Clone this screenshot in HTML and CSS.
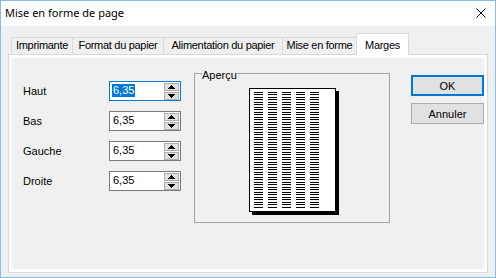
FILE: index.html
```html
<!DOCTYPE html>
<html lang="fr">
<head>
<meta charset="utf-8">
<title>Mise en forme de page</title>
<link rel="stylesheet" href="styles.css">
</head>
<body>
<div class="window">
  <div class="titlebar">
    <span class="title">Mise en forme de page</span>
    <svg class="close" width="10" height="10" viewBox="0 0 10 10"><path d="M0.5 0.5 L9.5 9.5 M9.5 0.5 L0.5 9.5" stroke="#000" stroke-width="1" fill="none"/></svg>
  </div>
  <div class="client">
    <div class="tabs">
      <div class="tab t1">Imprimante</div>
      <div class="tab t2">Format du papier</div>
      <div class="tab t3">Alimentation du papier</div>
      <div class="tab t4">Mise en forme</div>
      <div class="tab active t5">Marges</div>
    </div>
    <div class="panel">
      <div class="page">
        <div class="fields">
          <span class="lbl">Haut</span>
          <div class="spin focus"><span class="val"><span class="sel">6,35</span></span><div class="arrows"><div class="arr"><svg width="7" height="4" class="ico"><rect x="3" y="0" width="1" height="1"/><rect x="2" y="1" width="3" height="1"/><rect x="1" y="2" width="5" height="1"/><rect x="0" y="3" width="7" height="1"/></svg></div><div class="arr"><svg width="7" height="4" class="ico"><rect x="0" y="0" width="7" height="1"/><rect x="1" y="1" width="5" height="1"/><rect x="2" y="2" width="3" height="1"/><rect x="3" y="3" width="1" height="1"/></svg></div></div></div>
          <span class="lbl">Bas</span>
          <div class="spin"><span class="val">6,35</span><div class="arrows"><div class="arr"><svg width="7" height="4" class="ico"><rect x="3" y="0" width="1" height="1"/><rect x="2" y="1" width="3" height="1"/><rect x="1" y="2" width="5" height="1"/><rect x="0" y="3" width="7" height="1"/></svg></div><div class="arr"><svg width="7" height="4" class="ico"><rect x="0" y="0" width="7" height="1"/><rect x="1" y="1" width="5" height="1"/><rect x="2" y="2" width="3" height="1"/><rect x="3" y="3" width="1" height="1"/></svg></div></div></div>
          <span class="lbl">Gauche</span>
          <div class="spin"><span class="val">6,35</span><div class="arrows"><div class="arr"><svg width="7" height="4" class="ico"><rect x="3" y="0" width="1" height="1"/><rect x="2" y="1" width="3" height="1"/><rect x="1" y="2" width="5" height="1"/><rect x="0" y="3" width="7" height="1"/></svg></div><div class="arr"><svg width="7" height="4" class="ico"><rect x="0" y="0" width="7" height="1"/><rect x="1" y="1" width="5" height="1"/><rect x="2" y="2" width="3" height="1"/><rect x="3" y="3" width="1" height="1"/></svg></div></div></div>
          <span class="lbl">Droite</span>
          <div class="spin"><span class="val">6,35</span><div class="arrows"><div class="arr"><svg width="7" height="4" class="ico"><rect x="3" y="0" width="1" height="1"/><rect x="2" y="1" width="3" height="1"/><rect x="1" y="2" width="5" height="1"/><rect x="0" y="3" width="7" height="1"/></svg></div><div class="arr"><svg width="7" height="4" class="ico"><rect x="0" y="0" width="7" height="1"/><rect x="1" y="1" width="5" height="1"/><rect x="2" y="2" width="3" height="1"/><rect x="3" y="3" width="1" height="1"/></svg></div></div></div>
        </div>
        <div class="group">
          <span class="legend">Aperçu</span>
          <div class="sheet">
            <div class="cols">
              <div class="col"></div><div class="col"></div><div class="col"></div><div class="col"></div><div class="col"></div>
            </div>
          </div>
        </div>
        <div class="buttons">
          <div class="btn default">OK</div>
          <div class="btn">Annuler</div>
        </div>
      </div>
    </div>
  </div>
</div>
</body>
</html>
```

FILE: styles.css
```css
* { box-sizing: border-box; }
html, body { margin: 0; padding: 0; }
body { width: 496px; height: 278px; overflow: hidden; background: #f0f0f0; }

.window {
  width: 496px; height: 278px;
  border: 1px solid #88bbee;
  background: #f0f0f0;
  display: flex; flex-direction: column;
}
.titlebar {
  height: 25px; background: #fff;
  display: flex; align-items: center;
  padding: 0 9px 1px 4px;
}
.title { font-family: "Noto Sans", sans-serif; font-size: 11px; color: #000; line-height: 16px; }
.close { margin-left: auto; display: block; }

.client { flex: 1; padding: 7px 7px 4px 7px; display: flex; flex-direction: column; }

.tabs { height: 21px; display: flex; align-items: flex-end; padding-left: 3px; }
.tab {
  height: 17px; border: 1px solid #d9d9d9; border-bottom: none;
  background: #f0f0f0; margin-left: -1px;
  font-family: "Liberation Sans", Arial, sans-serif; font-size: 11px; line-height: 15px;
  letter-spacing: -0.3px;
  text-align: center; white-space: nowrap; overflow: hidden; color: #000;
}
.t1 { margin-left: 0; width: 62px; }
.t2 { width: 92px; }
.t3 { width: 120px; }
.t4 { width: 75px; }
.t5 { width: 53px; }
.tab.active { height: 22px; margin-bottom: -1px; background: #fff; position: relative; z-index: 1; padding-top: 4px; }

.panel { height: 219px; border: 1px solid #d9d9d9; background: #fff; padding: 3px; }
.page { height: 100%; background: #f0f0f0; display: flex; align-items: flex-start; }

.fields {
  margin-top: 23px; padding-left: 11px;
  display: grid; grid-template-columns: 86px 72px; grid-auto-rows: 20px; row-gap: 10px; align-items: center;
  font-family: "Liberation Sans", Arial, sans-serif; font-size: 11px;
}
.lbl { color: #000; }
.spin { height: 20px; border: 1px solid #7a7a7a; background: #fff; display: flex; align-items: center; padding: 0 1px 2px 3px; }
.spin.focus { border-color: #0078d7; }
.val { flex: 1; line-height: 13px; color: #000; }
.sel { display: inline-block; height: 13px; background: #0078d7; color: #fff; margin-left: -1px; padding: 0 1px; }
.arrows { width: 15px; display: flex; flex-direction: column; gap: 1px; margin-bottom: -2px; }
.arr { height: 8px; border: 1px solid #adadad; background: #e1e1e1; display: flex; align-items: center; justify-content: center; }
.ico { display: block; fill: #000; shape-rendering: crispEdges; }

.group {
  margin-left: 13px; margin-top: 15px; width: 196px; height: 150px;
  border: 1px solid #a0a0a0; position: relative; padding-top: 14px;
}
.legend {
  position: absolute; left: 7px; top: -5px; background: #f0f0f0;
  font-family: "Liberation Sans", Arial, sans-serif; font-size: 11px; line-height: 13px; color: #000;
}
.sheet {
  width: 87px; height: 124px; margin: 0 auto; border: 1px solid #000; background: #fff;
  box-shadow: 3px 3px 0 #000; padding: 3px 0 0 4px;
}
.cols { display: flex; gap: 5px; }
.col {
  width: 9px; height: 116px;
  background: repeating-linear-gradient(to bottom, #000 0, #000 1px, transparent 1px, transparent 2px, #000 2px, #000 3px, transparent 3px, transparent 5px);
}

.buttons { margin-left: 21px; margin-top: 17px; display: flex; flex-direction: column; gap: 7px; }
.btn {
  width: 73px; height: 21px; border: 1px solid #adadad; background: #e1e1e1;
  font-family: "Liberation Sans", Arial, sans-serif; font-size: 11px; color: #000;
  display: flex; align-items: center; justify-content: center;
}
.btn.default { border: 2px solid #0078d7; }
```
